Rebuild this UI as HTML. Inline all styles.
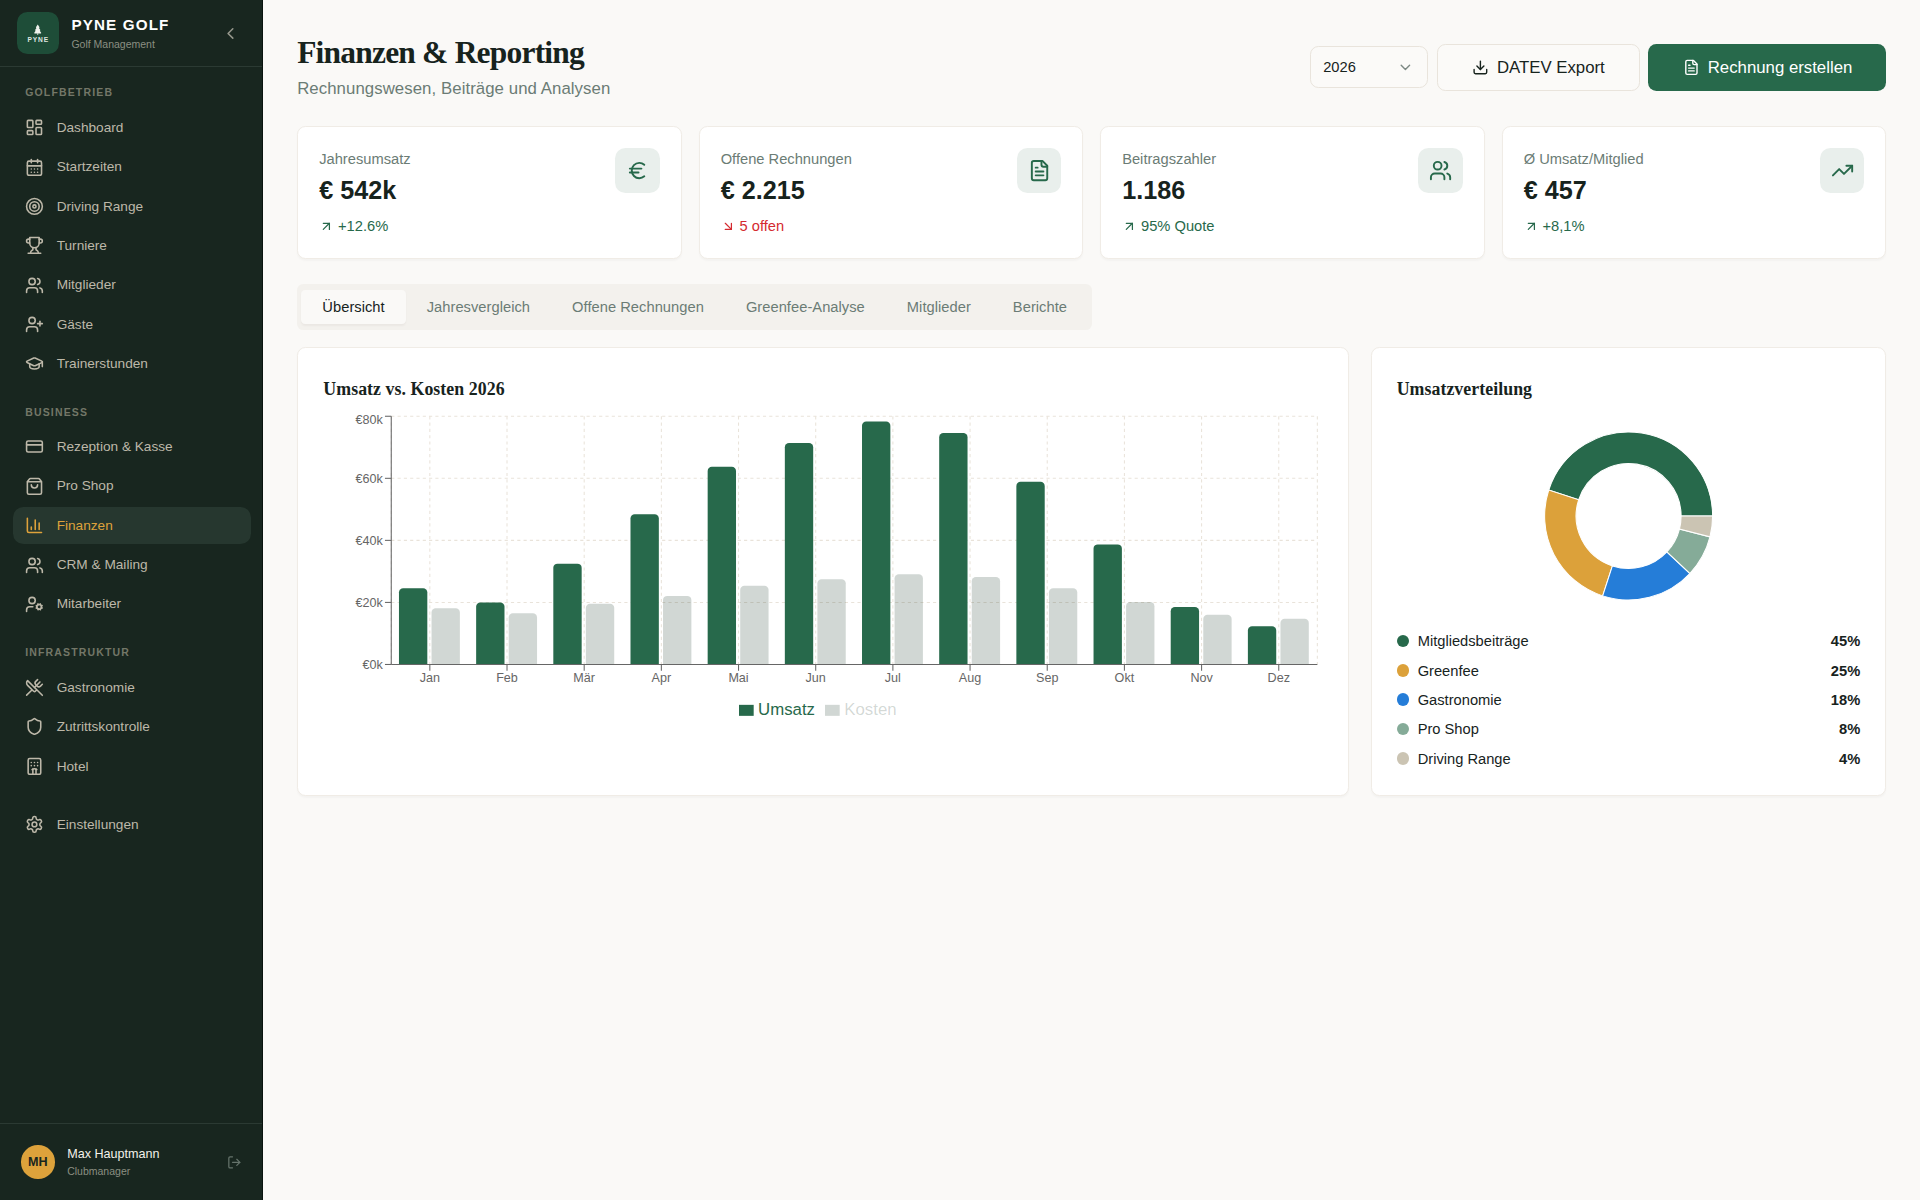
<!DOCTYPE html>
<html lang="de">
<head>
<meta charset="utf-8">
<title>Finanzen &amp; Reporting</title>
<style>
*{box-sizing:border-box;margin:0;padding:0}
html,body{width:1920px;height:1200px;overflow:hidden;background:#faf9f7}
body{font-family:"Liberation Sans",sans-serif;color:#17231d;-webkit-font-smoothing:antialiased}
#app{zoom:1.05;width:1828.5714px;height:1142.857px;display:flex;position:relative;overflow:hidden}
svg.ic{fill:none;stroke:currentColor;stroke-width:2;stroke-linecap:round;stroke-linejoin:round;flex:none;display:block}
.serif{font-family:"Liberation Serif",serif}

/* sidebar */
aside{width:250px;height:100%;background:#18261f;border-right:1px solid #0a140f;display:flex;flex-direction:column;flex:none;position:relative;color:#bdb8a9}
.sb-head{height:64px;border-bottom:1px solid #2b3a33;display:flex;align-items:center;padding:0 16px;flex:none;position:relative}
.logo{width:40px;height:40px;border-radius:10px;background:#1e4d38;position:relative;flex:none}
.logo svg{position:absolute;left:16.55px;top:11px;width:7.1px;height:11.2px}
.logo span{position:absolute;left:0;right:0;top:23.2px;text-align:center;font-size:6.3px;font-weight:700;letter-spacing:.8px;color:#dfe6e0;padding-left:.8px;line-height:7px}
.brand{margin-left:12px}
.brand b{display:block;font-size:14.5px;line-height:20px;letter-spacing:1.08px;color:#fff;font-weight:700;position:relative;top:-.3px}
.brand small{display:block;font-size:10px;line-height:15px;color:#8b8f82;margin-top:0px}
.collapse{position:absolute;left:210.7px;top:23px;width:18px;height:18px;color:#96978c}
nav{padding:16.9px 12px 0 12px;flex:1}
.sec{font-size:10px;line-height:15px;font-weight:700;letter-spacing:1.1px;color:#737768;padding:0 12px;margin-bottom:8px}
.grp{margin-bottom:20.6px}
.grp:nth-child(2){padding-top:.17px}
.grp:nth-child(3){margin-bottom:20.43px}
.it{display:flex;align-items:center;gap:12px;padding:8px 12px;font-size:13px;line-height:19.5px;border-radius:10px;margin-bottom:2px;width:226.9px}
.it svg{width:18px;height:18px}
.it.act{background:#26372f;color:#dea23b}
.sb-foot{border-top:1px solid #2b3a33;padding:20px;display:flex;align-items:center;gap:12px;flex:none;position:relative}
.av{width:32px;height:32px;border-radius:50%;background:#dda23b;color:#18261f;font-size:12px;font-weight:700;display:flex;align-items:center;justify-content:center;flex:none}
.who b{display:block;font-weight:400;font-size:12px;line-height:16px;color:#f3f1ea}
.who small{display:block;font-size:10px;line-height:15px;color:#8b8f82;margin-top:1px}
.logout{position:absolute;left:216.2px;top:29.6px;width:14px;height:14px;color:#66746c}

/* main */
main{flex:1;padding:32px;min-width:0;margin-left:1px}
.hdr{display:flex;align-items:center;justify-content:space-between;height:64.4px}
h1{font-family:"Liberation Serif",serif;font-weight:700;font-size:30px;line-height:36px;letter-spacing:-.75px;color:#17231d}
.sub{font-size:16px;line-height:24px;color:#6b7c75;margin-top:4px;letter-spacing:.065px}
.acts{display:flex;align-items:center;gap:8px}
.sel{width:113px;height:40px;border:1px solid #e9e4dc;border-radius:8px;background:#fbfaf8;display:flex;align-items:center;justify-content:space-between;padding:0 13px 0 12px;font-size:14px;color:#17231d}
.sel svg{width:16px;height:16px;color:#7d8984}
.btn{height:44.7px;border-radius:8px;display:flex;align-items:center;justify-content:center;gap:8px;font-size:16px}
.btn svg{width:16px;height:16px}
.btn.o{width:193.6px;border:1px solid #e9e4dc;background:#fbfaf8;color:#17231d}
.btn.p{width:226.6px;background:#27694b;color:#fff;margin-left:.2px}

.stats{display:grid;grid-template-columns:repeat(4,1fr);gap:16px;margin-top:24px}
.card{background:#fff;border:1px solid #f0ece6;border-radius:8px;box-shadow:0 1px 2px rgba(40,30,10,.028)}
.st{padding:20px;position:relative}
.st .l{font-size:14px;line-height:20px;color:#6b7c75}
.st .v{font-size:24px;line-height:32px;font-weight:700;margin-top:4px;color:#17231d}
.st .t{display:flex;align-items:center;gap:4px;font-size:14px;line-height:20px;margin-top:8px;color:#27694b}
.st .t svg{width:14px;height:14px}
.st .t.r{color:#d42a30}
.st .ib{position:absolute;right:20px;top:20px;width:42.5px;height:42.5px;border-radius:10px;background:#e9efec;color:#27694b;display:flex;align-items:center;justify-content:center}
.st .ib svg{width:22px;height:22px}

.tabs{margin-top:24px;height:44px;background:#f3f1ed;border-radius:6px;display:inline-flex;align-items:center;padding:0 4px;vertical-align:top}
.tab{height:32px;padding:0 20px;display:flex;align-items:center;font-size:14px;color:#6b7c75;border-radius:4px;white-space:nowrap;letter-spacing:.033px}
.tab.on{background:#faf9f7;color:#17231d;box-shadow:0 1px 2px rgba(40,30,10,.04)}
.grid2{display:grid;grid-template-columns:repeat(3,1fr);gap:20.5px;margin-top:16px}
.big{grid-column:span 2;padding:24px}
.side{padding:24px 24px 24.6px 23.5px}
h3{font-family:"Liberation Serif",serif;font-weight:700;font-size:17px;line-height:28px;letter-spacing:.045px;color:#17231d;margin-bottom:8.25px}
.chart{position:relative}
.chart svg.bc{display:block;position:absolute;left:0;top:0}
.lg{position:absolute;left:5px;bottom:5px;width:942px;font-size:16px;line-height:24px}
.lg ul{list-style:none;text-align:center}
.lg li{display:inline-block;margin-right:10px}
.lg li svg{display:inline-block;vertical-align:middle;margin-right:4px}
.piebox{height:200px}
.piebox svg{display:block}
.rows{margin-top:9px}
.row{display:flex;align-items:center;font-size:14px;line-height:20px;margin-bottom:8px;color:#17231d}
.row:last-child{margin-bottom:0}
.row i{width:12px;height:12px;border-radius:50%;margin-right:8px;flex:none}
.row b{margin-left:auto;font-weight:700}

/* baseline nudges */
.it span{position:relative;top:.5px}
.grp:nth-child(2) .it span{top:.33px}
.grp:nth-child(3) .it span{top:.78px}
.brand small{position:relative;top:.9px}
.who{position:relative;top:.9px}
.sec{position:relative;top:.63px}
.grp:first-child .sec{top:.3px}
.sub{position:relative;top:.6px}
.btn span{position:relative;top:.8px}
.st .l{position:relative;top:.8px}
.st .v{position:relative;top:.5px}
h3{position:relative;top:1.9px}
.lg{margin-bottom:-1.1px}
.row span,.row b{position:relative;top:.8px}
</style>
</head>
<body>
<div id="app">
<aside>
  <div class="sb-head">
    <div class="logo">
      <svg viewBox="3 2 18 21" preserveAspectRatio="none"><path fill="#eef1ec" d="m17 14 3 3.3a1 1 0 0 1-.7 1.7H4.7a1 1 0 0 1-.7-1.7L7 14h-.3a1 1 0 0 1-.7-1.7L9 9h-.2A1 1 0 0 1 8 7.3L12 3l4 4.3a1 1 0 0 1-.8 1.7H15l3 3.3a1 1 0 0 1-.7 1.7H17Z"/><path d="M12 22.5v-4" stroke="#eef1ec" stroke-width="1.6"/></svg>
      <span>PYNE</span>
    </div>
    <div class="brand"><b>PYNE GOLF</b><small>Golf Management</small></div>
    <svg class="ic collapse" viewBox="0 0 24 24"><path d="m15 18-6-6 6-6"/></svg>
  </div>
  <nav>
    <div class="grp">
      <div class="sec">GOLFBETRIEB</div>
      <div class="it"><svg class="ic" viewBox="0 0 24 24"><rect width="7" height="9" x="3" y="3" rx="1"/><rect width="7" height="5" x="14" y="3" rx="1"/><rect width="7" height="9" x="14" y="12" rx="1"/><rect width="7" height="5" x="3" y="16" rx="1"/></svg><span>Dashboard</span></div>
      <div class="it"><svg class="ic" viewBox="0 0 24 24"><path d="M8 2v4"/><path d="M16 2v4"/><rect width="18" height="18" x="3" y="4" rx="2"/><path d="M3 10h18"/><path d="M8 14h.01"/><path d="M12 14h.01"/><path d="M16 14h.01"/><path d="M8 18h.01"/><path d="M12 18h.01"/><path d="M16 18h.01"/></svg><span>Startzeiten</span></div>
      <div class="it"><svg class="ic" viewBox="0 0 24 24"><circle cx="12" cy="12" r="10"/><circle cx="12" cy="12" r="6"/><circle cx="12" cy="12" r="2"/></svg><span>Driving Range</span></div>
      <div class="it"><svg class="ic" viewBox="0 0 24 24"><path d="M6 9H4.5a2.5 2.5 0 0 1 0-5H6"/><path d="M18 9h1.5a2.5 2.5 0 0 0 0-5H18"/><path d="M4 22h16"/><path d="M10 14.66V17c0 .55-.47.98-.97 1.21C7.85 18.75 7 20.24 7 22"/><path d="M14 14.66V17c0 .55.47.98.97 1.21C16.15 18.75 17 20.24 17 22"/><path d="M18 2H6v7a6 6 0 0 0 12 0V2Z"/></svg><span>Turniere</span></div>
      <div class="it"><svg class="ic" viewBox="0 0 24 24"><path d="M16 21v-2a4 4 0 0 0-4-4H6a4 4 0 0 0-4 4v2"/><circle cx="9" cy="7" r="4"/><path d="M22 21v-2a4 4 0 0 0-3-3.87"/><path d="M16 3.13a4 4 0 0 1 0 7.75"/></svg><span>Mitglieder</span></div>
      <div class="it"><svg class="ic" viewBox="0 0 24 24"><path d="M16 21v-2a4 4 0 0 0-4-4H6a4 4 0 0 0-4 4v2"/><circle cx="9" cy="7" r="4"/><line x1="19" x2="19" y1="8" y2="14"/><line x1="22" x2="16" y1="11" y2="11"/></svg><span>Gäste</span></div>
      <div class="it"><svg class="ic" viewBox="0 0 24 24"><path d="M21.42 10.922a1 1 0 0 0-.019-1.838L12.83 5.18a2 2 0 0 0-1.66 0L2.6 9.08a1 1 0 0 0 0 1.832l8.57 3.908a2 2 0 0 0 1.66 0z"/><path d="M22 10v6"/><path d="M6 12.5V16a6 3 0 0 0 12 0v-3.5"/></svg><span>Trainerstunden</span></div>
    </div>
    <div class="grp">
      <div class="sec">BUSINESS</div>
      <div class="it"><svg class="ic" viewBox="0 0 24 24"><rect width="20" height="14" x="2" y="5" rx="2"/><line x1="2" x2="22" y1="10" y2="10"/></svg><span>Rezeption &amp; Kasse</span></div>
      <div class="it"><svg class="ic" viewBox="0 0 24 24"><path d="M16 10a4 4 0 0 1-8 0"/><path d="M3.103 6.034h17.794"/><path d="M3.4 5.467a2 2 0 0 0-.4 1.2V20a2 2 0 0 0 2 2h14a2 2 0 0 0 2-2V6.667a2 2 0 0 0-.4-1.2l-2-2.667A2 2 0 0 0 17 2H7a2 2 0 0 0-1.6.8z"/></svg><span>Pro Shop</span></div>
      <div class="it act"><svg class="ic" viewBox="0 0 24 24"><path d="M3 3v16a2 2 0 0 0 2 2h16"/><path d="M18 17V9"/><path d="M13 17V5"/><path d="M8 17v-3"/></svg><span>Finanzen</span></div>
      <div class="it"><svg class="ic" viewBox="0 0 24 24"><path d="M16 21v-2a4 4 0 0 0-4-4H6a4 4 0 0 0-4 4v2"/><circle cx="9" cy="7" r="4"/><path d="M22 21v-2a4 4 0 0 0-3-3.87"/><path d="M16 3.13a4 4 0 0 1 0 7.75"/></svg><span>CRM &amp; Mailing</span></div>
      <div class="it"><svg class="ic" viewBox="0 0 24 24"><circle cx="18" cy="15" r="3"/><circle cx="9" cy="7" r="4"/><path d="M10 15H6a4 4 0 0 0-4 4v2"/><path d="m21.7 16.4-.9-.3"/><path d="m15.2 13.9-.9-.3"/><path d="m16.6 18.7.3-.9"/><path d="m19.1 12.2.3-.9"/><path d="m19.6 18.7-.4-1"/><path d="m16.8 12.3-.4-1"/><path d="m14.3 16.6 1-.4"/><path d="m20.7 13.8 1-.4"/></svg><span>Mitarbeiter</span></div>
    </div>
    <div class="grp">
      <div class="sec">INFRASTRUKTUR</div>
      <div class="it"><svg class="ic" viewBox="0 0 24 24"><path d="m16 2-2.3 2.3a3 3 0 0 0 0 4.2l1.8 1.8a3 3 0 0 0 4.2 0L22 8"/><path d="M15 15 3.3 3.3a4.2 4.2 0 0 0 0 6l7.3 7.3c.7.7 2 .7 2.8 0L15 15Zm0 0 7 7"/><path d="m2.1 21.8 6.4-6.3"/><path d="m19 5-7 7"/></svg><span>Gastronomie</span></div>
      <div class="it"><svg class="ic" viewBox="0 0 24 24"><path d="M20 13c0 5-3.5 7.5-7.66 8.95a1 1 0 0 1-.67-.01C7.5 20.5 4 18 4 13V6a1 1 0 0 1 1-1c2 0 4.5-1.2 6.24-2.72a1.17 1.17 0 0 1 1.52 0C14.51 3.81 17 5 19 5a1 1 0 0 1 1 1z"/></svg><span>Zutrittskontrolle</span></div>
      <div class="it"><svg class="ic" viewBox="0 0 24 24"><path d="M10 22v-6.57"/><path d="M12 11h.01"/><path d="M12 7h.01"/><path d="M14 15.43V22"/><path d="M15 16a5 5 0 0 0-6 0"/><path d="M16 11h.01"/><path d="M16 7h.01"/><path d="M8 11h.01"/><path d="M8 7h.01"/><rect x="4" y="2" width="16" height="20" rx="2"/></svg><span>Hotel</span></div>
    </div>
    <div class="grp">
      <div class="it"><svg class="ic" viewBox="0 0 24 24"><path d="M12.22 2h-.44a2 2 0 0 0-2 2v.18a2 2 0 0 1-1 1.73l-.43.25a2 2 0 0 1-2 0l-.15-.08a2 2 0 0 0-2.73.73l-.22.38a2 2 0 0 0 .73 2.73l.15.1a2 2 0 0 1 1 1.72v.51a2 2 0 0 1-1 1.74l-.15.09a2 2 0 0 0-.73 2.73l.22.38a2 2 0 0 0 2.73.73l.15-.08a2 2 0 0 1 2 0l.43.25a2 2 0 0 1 1 1.73V20a2 2 0 0 0 2 2h.44a2 2 0 0 0 2-2v-.18a2 2 0 0 1 1-1.73l.43-.25a2 2 0 0 1 2 0l.15.08a2 2 0 0 0 2.73-.73l.22-.39a2 2 0 0 0-.73-2.73l-.15-.08a2 2 0 0 1-1-1.74v-.5a2 2 0 0 1 1-1.74l.15-.09a2 2 0 0 0 .73-2.73l-.22-.38a2 2 0 0 0-2.73-.73l-.15.08a2 2 0 0 1-2 0l-.43-.25a2 2 0 0 1-1-1.73V4a2 2 0 0 0-2-2z"/><circle cx="12" cy="12" r="3"/></svg><span>Einstellungen</span></div>
    </div>
  </nav>
  <div class="sb-foot">
    <div class="av">MH</div>
    <div class="who"><b>Max Hauptmann</b><small>Clubmanager</small></div>
    <svg class="ic logout" viewBox="0 0 24 24"><path d="M9 21H5a2 2 0 0 1-2-2V5a2 2 0 0 1 2-2h4"/><polyline points="16 17 21 12 16 7"/><line x1="21" x2="9" y1="12" y2="12"/></svg>
  </div>
</aside>
<main>
  <div class="hdr">
    <div><h1>Finanzen &amp; Reporting</h1><div class="sub">Rechnungswesen, Beiträge und Analysen</div></div>
    <div class="acts">
      <div class="sel"><span>2026</span><svg class="ic" viewBox="0 0 24 24"><path d="m6 9 6 6 6-6"/></svg></div>
      <div class="btn o"><svg class="ic" viewBox="0 0 24 24"><path d="M21 15v4a2 2 0 0 1-2 2H5a2 2 0 0 1-2-2v-4"/><polyline points="7 10 12 15 17 10"/><line x1="12" x2="12" y1="15" y2="3"/></svg><span>DATEV Export</span></div>
      <div class="btn p"><svg class="ic" viewBox="0 0 24 24"><path d="M15 2H6a2 2 0 0 0-2 2v16a2 2 0 0 0 2 2h12a2 2 0 0 0 2-2V7Z"/><path d="M14 2v4a2 2 0 0 0 2 2h4"/><path d="M10 9H8"/><path d="M16 13H8"/><path d="M16 17H8"/></svg><span>Rechnung erstellen</span></div>
    </div>
  </div>
  <div class="stats">
    <div class="card st"><div class="l">Jahresumsatz</div><div class="v">€ 542k</div><div class="t"><svg class="ic" viewBox="0 0 24 24"><path d="M7 7h10v10"/><path d="M7 17 17 7"/></svg><span>+12.6%</span></div><div class="ib"><svg class="ic" viewBox="0 0 24 24"><path d="M4 10h12"/><path d="M4 14h9"/><path d="M19 6a7.7 7.7 0 0 0-5.2-2A7.9 7.9 0 0 0 6 12c0 4.4 3.5 8 7.8 8 2 0 3.8-.8 5.2-2"/></svg></div></div>
    <div class="card st"><div class="l">Offene Rechnungen</div><div class="v">€ 2.215</div><div class="t r"><svg class="ic" viewBox="0 0 24 24"><path d="m7 7 10 10"/><path d="M17 7v10H7"/></svg><span>5 offen</span></div><div class="ib"><svg class="ic" viewBox="0 0 24 24"><path d="M15 2H6a2 2 0 0 0-2 2v16a2 2 0 0 0 2 2h12a2 2 0 0 0 2-2V7Z"/><path d="M14 2v4a2 2 0 0 0 2 2h4"/><path d="M10 9H8"/><path d="M16 13H8"/><path d="M16 17H8"/></svg></div></div>
    <div class="card st"><div class="l">Beitragszahler</div><div class="v">1.186</div><div class="t"><svg class="ic" viewBox="0 0 24 24"><path d="M7 7h10v10"/><path d="M7 17 17 7"/></svg><span>95% Quote</span></div><div class="ib"><svg class="ic" viewBox="0 0 24 24"><path d="M16 21v-2a4 4 0 0 0-4-4H6a4 4 0 0 0-4 4v2"/><circle cx="9" cy="7" r="4"/><path d="M22 21v-2a4 4 0 0 0-3-3.87"/><path d="M16 3.13a4 4 0 0 1 0 7.75"/></svg></div></div>
    <div class="card st"><div class="l">Ø Umsatz/Mitglied</div><div class="v">€ 457</div><div class="t"><svg class="ic" viewBox="0 0 24 24"><path d="M7 7h10v10"/><path d="M7 17 17 7"/></svg><span>+8,1%</span></div><div class="ib"><svg class="ic" viewBox="0 0 24 24"><polyline points="22 7 13.5 15.5 8.5 10.5 2 17"/><polyline points="16 7 22 7 22 13"/></svg></div></div>
  </div>
  <div class="tabs"><div class="tab on">Übersicht</div><div class="tab">Jahresvergleich</div><div class="tab">Offene Rechnungen</div><div class="tab">Greenfee-Analyse</div><div class="tab">Mitglieder</div><div class="tab">Berichte</div></div>
  <div class="grid2"><div class="card big"><h3>Umsatz vs. Kosten 2026</h3><div class="chart" style="width:952px;height:300px"><svg class="bc" width="952" height="300" viewBox="0 0 952 300"><g stroke="#e9e3da" stroke-dasharray="3 3" fill="none"><line x1="65" y1="241.40" x2="947" y2="241.40"/><line x1="65" y1="182.30" x2="947" y2="182.30"/><line x1="65" y1="123.20" x2="947" y2="123.20"/><line x1="65" y1="64.10" x2="947" y2="64.10"/><line x1="65" y1="5.00" x2="947" y2="5.00"/><line x1="65.00" y1="5" x2="65.00" y2="241.40"/><line x1="101.75" y1="5" x2="101.75" y2="241.40"/><line x1="175.25" y1="5" x2="175.25" y2="241.40"/><line x1="248.75" y1="5" x2="248.75" y2="241.40"/><line x1="322.25" y1="5" x2="322.25" y2="241.40"/><line x1="395.75" y1="5" x2="395.75" y2="241.40"/><line x1="469.25" y1="5" x2="469.25" y2="241.40"/><line x1="542.75" y1="5" x2="542.75" y2="241.40"/><line x1="616.25" y1="5" x2="616.25" y2="241.40"/><line x1="689.75" y1="5" x2="689.75" y2="241.40"/><line x1="763.25" y1="5" x2="763.25" y2="241.40"/><line x1="836.75" y1="5" x2="836.75" y2="241.40"/><line x1="910.25" y1="5" x2="910.25" y2="241.40"/><line x1="947.00" y1="5" x2="947.00" y2="241.40"/></g><path fill="#27694b" d="M72.35,172.71A4,4,0,0,1,76.35,168.71L95.35,168.71A4,4,0,0,1,99.35,172.71L99.35,241.40L72.35,241.40Z"/><path fill="#27694b" d="M145.85,186.30A4,4,0,0,1,149.85,182.30L168.85,182.30A4,4,0,0,1,172.85,186.30L172.85,241.40L145.85,241.40Z"/><path fill="#27694b" d="M219.35,149.36A4,4,0,0,1,223.35,145.36L242.35,145.36A4,4,0,0,1,246.35,149.36L246.35,241.40L219.35,241.40Z"/><path fill="#27694b" d="M292.85,102.38A4,4,0,0,1,296.85,98.38L315.85,98.38A4,4,0,0,1,319.85,102.38L319.85,241.40L292.85,241.40Z"/><path fill="#27694b" d="M366.35,57.17A4,4,0,0,1,370.35,53.17L389.35,53.17A4,4,0,0,1,393.35,57.17L393.35,241.40L366.35,241.40Z"/><path fill="#27694b" d="M439.85,34.41A4,4,0,0,1,443.85,30.41L462.85,30.41A4,4,0,0,1,466.85,34.41L466.85,241.40L439.85,241.40Z"/><path fill="#27694b" d="M513.35,14.02A4,4,0,0,1,517.35,10.02L536.35,10.02A4,4,0,0,1,540.35,14.02L540.35,241.40L513.35,241.40Z"/><path fill="#27694b" d="M586.85,24.96A4,4,0,0,1,590.85,20.96L609.85,20.96A4,4,0,0,1,613.85,24.96L613.85,241.40L586.85,241.40Z"/><path fill="#27694b" d="M660.35,71.35A4,4,0,0,1,664.35,67.35L683.35,67.35A4,4,0,0,1,687.35,71.35L687.35,241.40L660.35,241.40Z"/><path fill="#27694b" d="M733.85,131.04A4,4,0,0,1,737.85,127.04L756.85,127.04A4,4,0,0,1,760.85,131.04L760.85,241.40L733.85,241.40Z"/><path fill="#27694b" d="M807.35,190.73A4,4,0,0,1,811.35,186.73L830.35,186.73A4,4,0,0,1,834.35,190.73L834.35,241.40L807.35,241.40Z"/><path fill="#27694b" d="M880.85,209.05A4,4,0,0,1,884.85,205.05L903.85,205.05A4,4,0,0,1,907.85,209.05L907.85,241.40L880.85,241.40Z"/><path fill="rgba(26,56,40,.2)" d="M103.35,191.91A4,4,0,0,1,107.35,187.91L126.35,187.91A4,4,0,0,1,130.35,191.91L130.35,241.40L103.35,241.40Z"/><path fill="rgba(26,56,40,.2)" d="M176.85,196.64A4,4,0,0,1,180.85,192.64L199.85,192.64A4,4,0,0,1,203.85,196.64L203.85,241.40L176.85,241.40Z"/><path fill="rgba(26,56,40,.2)" d="M250.35,187.48A4,4,0,0,1,254.35,183.48L273.35,183.48A4,4,0,0,1,277.35,187.48L277.35,241.40L250.35,241.40Z"/><path fill="rgba(26,56,40,.2)" d="M323.85,180.09A4,4,0,0,1,327.85,176.09L346.85,176.09A4,4,0,0,1,350.85,180.09L350.85,241.40L323.85,241.40Z"/><path fill="rgba(26,56,40,.2)" d="M397.35,170.34A4,4,0,0,1,401.35,166.34L420.35,166.34A4,4,0,0,1,424.35,170.34L424.35,241.40L397.35,241.40Z"/><path fill="rgba(26,56,40,.2)" d="M470.85,164.14A4,4,0,0,1,474.85,160.14L493.85,160.14A4,4,0,0,1,497.85,164.14L497.85,241.40L470.85,241.40Z"/><path fill="rgba(26,56,40,.2)" d="M544.35,159.41A4,4,0,0,1,548.35,155.41L567.35,155.41A4,4,0,0,1,571.35,159.41L571.35,241.40L544.35,241.40Z"/><path fill="rgba(26,56,40,.2)" d="M617.85,162.07A4,4,0,0,1,621.85,158.07L640.85,158.07A4,4,0,0,1,644.85,162.07L644.85,241.40L617.85,241.40Z"/><path fill="rgba(26,56,40,.2)" d="M691.35,172.71A4,4,0,0,1,695.35,168.71L714.35,168.71A4,4,0,0,1,718.35,172.71L718.35,241.40L691.35,241.40Z"/><path fill="rgba(26,56,40,.2)" d="M764.85,186.00A4,4,0,0,1,768.85,182.00L787.85,182.00A4,4,0,0,1,791.85,186.00L791.85,241.40L764.85,241.40Z"/><path fill="rgba(26,56,40,.2)" d="M838.35,198.12A4,4,0,0,1,842.35,194.12L861.35,194.12A4,4,0,0,1,865.35,198.12L865.35,241.40L838.35,241.40Z"/><path fill="rgba(26,56,40,.2)" d="M911.85,201.96A4,4,0,0,1,915.85,197.96L934.85,197.96A4,4,0,0,1,938.85,201.96L938.85,241.40L911.85,241.40Z"/><g stroke="#666" fill="none"><line x1="65" y1="241.40" x2="947" y2="241.40"/><line x1="101.75" y1="241.40" x2="101.75" y2="247.40"/><line x1="175.25" y1="241.40" x2="175.25" y2="247.40"/><line x1="248.75" y1="241.40" x2="248.75" y2="247.40"/><line x1="322.25" y1="241.40" x2="322.25" y2="247.40"/><line x1="395.75" y1="241.40" x2="395.75" y2="247.40"/><line x1="469.25" y1="241.40" x2="469.25" y2="247.40"/><line x1="542.75" y1="241.40" x2="542.75" y2="247.40"/><line x1="616.25" y1="241.40" x2="616.25" y2="247.40"/><line x1="689.75" y1="241.40" x2="689.75" y2="247.40"/><line x1="763.25" y1="241.40" x2="763.25" y2="247.40"/><line x1="836.75" y1="241.40" x2="836.75" y2="247.40"/><line x1="910.25" y1="241.40" x2="910.25" y2="247.40"/><line x1="65" y1="5" x2="65" y2="241.40"/><line x1="59" y1="241.40" x2="65" y2="241.40"/><line x1="59" y1="182.30" x2="65" y2="182.30"/><line x1="59" y1="123.20" x2="65" y2="123.20"/><line x1="59" y1="64.10" x2="65" y2="64.10"/><line x1="59" y1="5.00" x2="65" y2="5.00"/></g><g fill="#666" font-size="12" font-family="Liberation Sans, sans-serif"><text x="101.75" y="249.40" dy="0.71em" text-anchor="middle">Jan</text><text x="175.25" y="249.40" dy="0.71em" text-anchor="middle">Feb</text><text x="248.75" y="249.40" dy="0.71em" text-anchor="middle">Mär</text><text x="322.25" y="249.40" dy="0.71em" text-anchor="middle">Apr</text><text x="395.75" y="249.40" dy="0.71em" text-anchor="middle">Mai</text><text x="469.25" y="249.40" dy="0.71em" text-anchor="middle">Jun</text><text x="542.75" y="249.40" dy="0.71em" text-anchor="middle">Jul</text><text x="616.25" y="249.40" dy="0.71em" text-anchor="middle">Aug</text><text x="689.75" y="249.40" dy="0.71em" text-anchor="middle">Sep</text><text x="763.25" y="249.40" dy="0.71em" text-anchor="middle">Okt</text><text x="836.75" y="249.40" dy="0.71em" text-anchor="middle">Nov</text><text x="910.25" y="249.40" dy="0.71em" text-anchor="middle">Dez</text><text x="57" y="241.40" dy="0.355em" text-anchor="end">€0k</text><text x="57" y="182.30" dy="0.355em" text-anchor="end">€20k</text><text x="57" y="123.20" dy="0.355em" text-anchor="end">€40k</text><text x="57" y="64.10" dy="0.355em" text-anchor="end">€60k</text><text x="57" y="8.40" dy="0.355em" text-anchor="end">€80k</text></g></svg><div class="lg"><ul><li><svg width="14" height="14" viewBox="0 0 32 32"><path fill="#27694b" d="M0,4h32v24h-32z"/></svg><span style="color:#27694b">Umsatz</span></li><li><svg width="14" height="14" viewBox="0 0 32 32"><path fill="rgba(26,56,40,.2)" d="M0,4h32v24h-32z"/></svg><span style="color:rgba(26,56,40,.2)">Kosten</span></li></ul></div></div></div><div class="card side"><h3>Umsatzverteilung</h3><div class="piebox"><svg class="pie" width="441.19" height="200" viewBox="0 0 441.19 200"><path fill="#27694b" stroke="#fff" stroke-width="1" d="M300.595,100.000A80,80,0,0,0,144.510,75.279L173.042,84.549A50,50,0,0,1,270.595,100.000Z"/><path fill="#dca13a" stroke="#fff" stroke-width="1" d="M144.510,75.279A80,80,0,0,0,195.874,176.085L205.144,147.553A50,50,0,0,1,173.042,84.549Z"/><path fill="#257dd8" stroke="#fff" stroke-width="1" d="M195.874,176.085A80,80,0,0,0,278.912,154.764L257.043,134.227A50,50,0,0,1,205.144,147.553Z"/><path fill="#85ab98" stroke="#fff" stroke-width="1" d="M278.912,154.764A80,80,0,0,0,298.082,119.895L269.024,112.434A50,50,0,0,1,257.043,134.227Z"/><path fill="#cbc4b3" stroke="#fff" stroke-width="1" d="M298.082,119.895A80,80,0,0,0,300.595,100.000L270.595,100.000A50,50,0,0,1,269.024,112.434Z"/></svg></div><div class="rows"><div class="row"><i style="background:#27694b"></i><span>Mitgliedsbeiträge</span><b>45%</b></div><div class="row"><i style="background:#dca13a"></i><span>Greenfee</span><b>25%</b></div><div class="row"><i style="background:#257dd8"></i><span>Gastronomie</span><b>18%</b></div><div class="row"><i style="background:#85ab98"></i><span>Pro Shop</span><b>8%</b></div><div class="row"><i style="background:#cbc4b3"></i><span>Driving Range</span><b>4%</b></div></div></div></div>
</main>
</div>
</body>
</html>
